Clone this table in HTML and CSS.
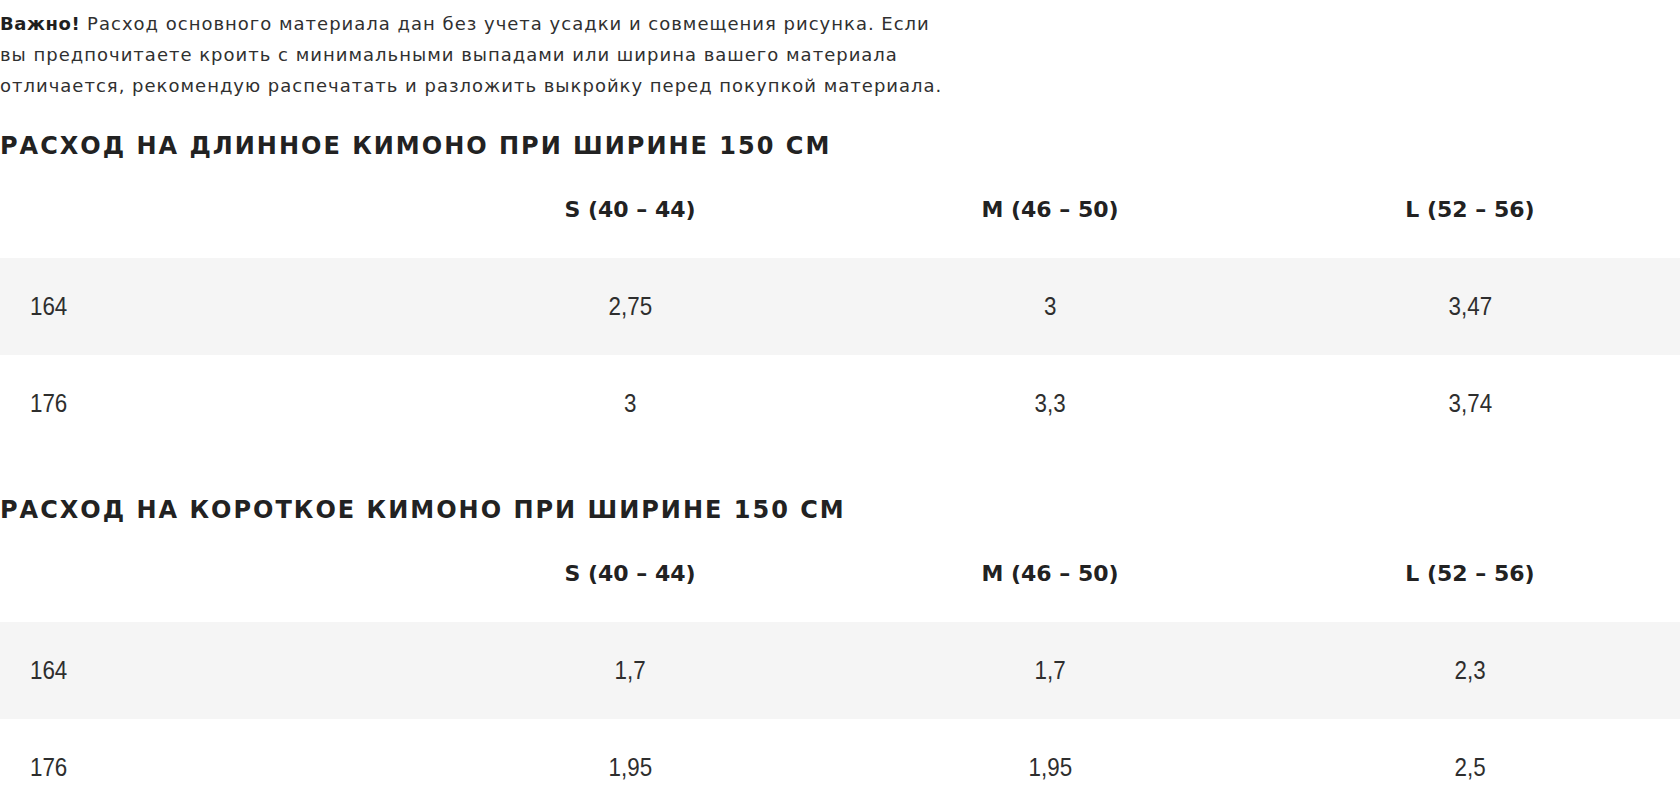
FILE: index.html
```html
<!DOCTYPE html>
<html lang="ru">
<head>
<meta charset="utf-8">
<title>Расход материала</title>
<link rel="stylesheet" href="styles.css">
</head>
<body>
<main class="page">
  <p class="note"><b>Важно!</b> Расход основного материала дан без учета усадки и совмещения рисунка. Если<br>вы предпочитаете кроить с минимальными выпадами или ширина вашего материала<br>отличается, рекомендую распечатать и разложить выкройку перед покупкой материала.</p>

  <section class="block">
    <h2 class="title">РАСХОД НА ДЛИННОЕ КИМОНО ПРИ ШИРИНЕ 150 СМ</h2>
    <table class="sizes">
      <thead>
        <tr><th></th><th>S (40 – 44)</th><th>M (46 – 50)</th><th>L (52 – 56)</th></tr>
      </thead>
      <tbody>
        <tr class="alt"><td><span class="num">164</span></td><td><span class="num">2,75</span></td><td><span class="num">3</span></td><td><span class="num">3,47</span></td></tr>
        <tr><td><span class="num">176</span></td><td><span class="num">3</span></td><td><span class="num">3,3</span></td><td><span class="num">3,74</span></td></tr>
      </tbody>
    </table>
  </section>

  <section class="block second">
    <h2 class="title">РАСХОД НА КОРОТКОЕ КИМОНО ПРИ ШИРИНЕ 150 СМ</h2>
    <table class="sizes">
      <thead>
        <tr><th></th><th>S (40 – 44)</th><th>M (46 – 50)</th><th>L (52 – 56)</th></tr>
      </thead>
      <tbody>
        <tr class="alt"><td><span class="num">164</span></td><td><span class="num">1,7</span></td><td><span class="num">1,7</span></td><td><span class="num">2,3</span></td></tr>
        <tr><td><span class="num">176</span></td><td><span class="num">1,95</span></td><td><span class="num">1,95</span></td><td><span class="num">2,5</span></td></tr>
      </tbody>
    </table>
  </section>
</main>
</body>
</html>
```

FILE: styles.css
```css
html, body {
  margin: 0;
  padding: 0;
  background: #ffffff;
}

.page {
  padding-top: 8px;
  color: #222222;
  font-family: "DejaVu Sans", "Open Sans", sans-serif;
}

.note {
  margin: 0;
  font-size: 18px;
  line-height: 31px;
  letter-spacing: 1px;
  color: #303030;
}

.note b {
  font-weight: 700;
  color: #1f1f1f;
  letter-spacing: 0.6px;
}

.block {
  margin-top: 31px;
}

.block.second {
  margin-top: 44px;
}

.title {
  margin: 0;
  font-size: 24px;
  line-height: 29px;
  font-weight: 700;
  letter-spacing: 2px;
  color: #222222;
}

.sizes {
  width: 100%;
  margin-top: 0;
  border-collapse: collapse;
  table-layout: fixed;
}

.sizes th,
.sizes td {
  height: 97px;
  padding: 0;
  text-align: center;
  vertical-align: middle;
}

.sizes th {
  font-size: 22px;
  font-weight: 700;
  color: #222222;
}

.sizes td {
  font-family: "Liberation Sans", Arial, sans-serif;
  font-size: 26px;
  font-weight: 400;
  color: #2e2e2e;
}

.num {
  display: inline-block;
  transform: scaleX(0.86);
}

.sizes td:first-child,
.sizes th:first-child {
  text-align: left;
  padding-left: 30px;
}

.sizes td:first-child .num {
  transform-origin: left center;
}

.sizes tr.alt td {
  background: #f5f5f5;
}
```
